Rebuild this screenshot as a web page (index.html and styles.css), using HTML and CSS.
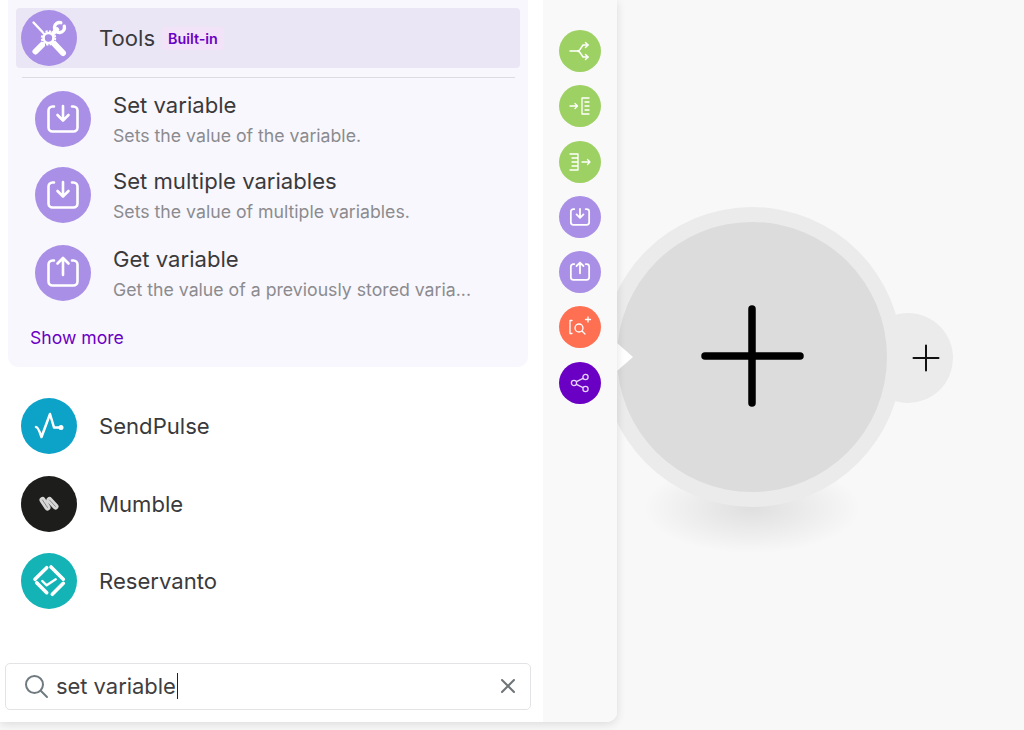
FILE: index.html
```html
<!DOCTYPE html>
<html lang="en">
<head>
    <meta charset="UTF-8">
    <title>Scenario editor</title>
    <link rel="stylesheet" href="styles.css">
</head>
<body>

    <div class="panel">
        <div class="list">
            <div class="group">
                <div class="app-row app-row-active">
                    <span class="icon icon-big bg-purple">
                        <svg width="44" height="44" viewBox="0 0 44 44" fill="none" stroke="#fff" stroke-linecap="round">
                            <circle cx="21.500" cy="22" r="5" stroke-width="2.600"/>
                            <circle cx="21.500" cy="22" r="6.800" stroke-width="1.800" stroke-dasharray="2.200 1.400" stroke-linecap="butt"/>
                            <path d="M6.500 6.500l9 9.500" stroke-width="2.400"/>
                            <path d="M27.500 28l8.500 9" stroke-width="6"/>
                            <path d="M15 29l-6.500 6.500" stroke-width="6"/>
                            <path d="M26.500 17l3.500-3.500" stroke-width="4.500"/>
                            <path d="M37.300 10.200A5 5 0 1 1 33.800 6.700" stroke-width="3.400"/>
                        </svg>
                    </span>
                    <span class="app-name">Tools</span>
                    <span class="badge">Built-in</span>
                </div>
                <div class="divider"></div>

                <div class="module module-tight">
                    <span class="icon icon-big bg-purple">
                        <svg width="38" height="38" viewBox="0 0 38 38" fill="none" stroke="#fff" stroke-width="2.600" stroke-linecap="round" stroke-linejoin="round">
                            <path d="M10 6.500H8.500a4 4 0 0 0-4 4v17a4 4 0 0 0 4 4h21a4 4 0 0 0 4-4v-17a4 4 0 0 0-4-4H28"/>
                            <path d="M19 6v14M13.500 15l5.500 5.500 5.500-5.500"/>
                        </svg>
                    </span>
                    <div class="module-text">
                        <div class="module-title">Set variable</div>
                        <div class="module-sub">Sets the value of the variable.</div>
                    </div>
                </div>
                <div class="module">
                    <span class="icon icon-big bg-purple">
                        <svg width="38" height="38" viewBox="0 0 38 38" fill="none" stroke="#fff" stroke-width="2.600" stroke-linecap="round" stroke-linejoin="round">
                            <path d="M10 6.500H8.500a4 4 0 0 0-4 4v17a4 4 0 0 0 4 4h21a4 4 0 0 0 4-4v-17a4 4 0 0 0-4-4H28"/>
                            <path d="M19 6v14M13.500 15l5.500 5.500 5.500-5.500"/>
                        </svg>
                    </span>
                    <div class="module-text">
                        <div class="module-title">Set multiple variables</div>
                        <div class="module-sub">Sets the value of multiple variables.</div>
                    </div>
                </div>
                <div class="module">
                    <span class="icon icon-big bg-purple">
                        <svg width="38" height="38" viewBox="0 0 38 38" fill="none" stroke="#fff" stroke-width="2.600" stroke-linecap="round" stroke-linejoin="round">
                            <path d="M10 6.500H8.500a4 4 0 0 0-4 4v17a4 4 0 0 0 4 4h21a4 4 0 0 0 4-4v-17a4 4 0 0 0-4-4H28"/>
                            <path d="M19 21V4M13.500 9.500L19 4l5.500 5.500"/>
                        </svg>
                    </span>
                    <div class="module-text">
                        <div class="module-title">Get variable</div>
                        <div class="module-sub">Get the value of a previously stored varia...</div>
                    </div>
                </div>
                <div class="show-more">Show more</div>
            </div>

            <div class="apps">
                <div class="app-row">
                    <span class="icon icon-big bg-sendpulse">
                        <svg width="36" height="36" viewBox="0 0 36 36" fill="none" stroke="#fff" stroke-width="2.500" stroke-linecap="round" stroke-linejoin="round">
                            <path d="M5 19c2 0 3.500 4 5.500 10L19 6l4 13.500h7"/>
                            <circle cx="30" cy="19.500" r="2.500" fill="#fff" stroke="none"/>
                        </svg>
                    </span>
                    <span class="app-name">SendPulse</span>
                </div>
                <div class="app-row">
                    <span class="icon icon-big bg-mumble">
                        <svg width="24" height="24" viewBox="0 0 24 24" fill="none" stroke-linecap="round">
                            <path d="M5.500 8l5 7.500M12.500 8l6 6.500" stroke="#d6d6d6" stroke-width="6"/>
                            <path d="M5.500 8l5 7.500M12.500 8l6 6.500" stroke="#8a8a8a" stroke-width="1"/>
                        </svg>
                    </span>
                    <span class="app-name">Mumble</span>
                </div>
                <div class="app-row">
                    <span class="icon icon-big bg-reservanto">
                        <svg width="38" height="38" viewBox="0 0 38 38" fill="none" stroke="#fff" stroke-linejoin="round" stroke-linecap="round">
                            <path d="M5 17.300L16.700 5.700M21 5l12.300 12.300" stroke-width="3.600"/>
                            <path d="M6.700 20.700l10 10M33.300 21.300l-11 11" stroke-width="3.600"/>
                            <path d="M12.300 19l4.400 4.300 9-6" stroke-width="2.400"/>
                        </svg>
                    </span>
                    <span class="app-name">Reservanto</span>
                </div>
            </div>

            <div class="search">
                <svg width="26" height="26" viewBox="0 0 26 26" fill="none" stroke="#6f7b80" stroke-width="2" stroke-linecap="round">
                    <circle cx="11.500" cy="11.500" r="8.500"/>
                    <path d="M18 18l6 6"/>
                </svg>
                <span class="search-text">set variable</span><span class="caret"></span>
                <svg class="search-clear" width="16" height="16" viewBox="0 0 16 16" fill="none" stroke="#6f7478" stroke-width="2" stroke-linecap="round">
                    <path d="M2 2l12 12M14 2L2 14"/>
                </svg>
            </div>
        </div>

        <div class="rail">
            <span class="icon icon-small bg-green">
                <svg width="24" height="24" viewBox="0 0 24 24" fill="none" stroke="#fff" stroke-width="1.500" stroke-linecap="round" stroke-linejoin="round">
                    <path d="M2 12h7c2 0 3-1 4-3l2-3h5M9 12c2 0 3 1 4 3l2 3h5"/>
                    <path d="M17.500 3.500L20 6l-2.500 2.500M17.500 15.500L20 18l-2.500 2.500"/>
                </svg>
            </span>
            <span class="icon icon-small bg-green">
                <svg width="24" height="24" viewBox="0 0 24 24" fill="none" stroke="#fff" stroke-width="1.300" stroke-linecap="round" stroke-linejoin="round">
                    <path d="M2 12h7M7 9.500l2.500 2.500L7 14.500"/>
                    <path d="M14 4v16h7M14 4h7M17 8h4M17 12h4M17 16h4"/>
                </svg>
            </span>
            <span class="icon icon-small bg-green">
                <svg width="24" height="24" viewBox="0 0 24 24" fill="none" stroke="#fff" stroke-width="1.300" stroke-linecap="round" stroke-linejoin="round">
                    <path d="M2 4h8v16H2M4 8h6M4 12h6M4 16h6"/>
                    <path d="M14 12h8M19.500 9.500L22 12l-2.500 2.500"/>
                </svg>
            </span>
            <span class="icon icon-small bg-purple">
                <svg width="24" height="24" viewBox="0 0 38 38" fill="none" stroke="#fff" stroke-width="2.800" stroke-linecap="round" stroke-linejoin="round">
                    <path d="M10 6.500H8.500a4 4 0 0 0-4 4v17a4 4 0 0 0 4 4h21a4 4 0 0 0 4-4v-17a4 4 0 0 0-4-4H28"/>
                    <path d="M19 6v14M13.500 15l5.500 5.500 5.500-5.500"/>
                </svg>
            </span>
            <span class="icon icon-small bg-purple">
                <svg width="24" height="24" viewBox="0 0 38 38" fill="none" stroke="#fff" stroke-width="2.800" stroke-linecap="round" stroke-linejoin="round">
                    <path d="M10 6.500H8.500a4 4 0 0 0-4 4v17a4 4 0 0 0 4 4h21a4 4 0 0 0 4-4v-17a4 4 0 0 0-4-4H28"/>
                    <path d="M19 21V4M13.500 9.500L19 4l5.500 5.500"/>
                </svg>
            </span>
            <span class="icon icon-small bg-orange">
                <svg width="28" height="28" viewBox="0 0 28 28" fill="none" stroke="#fff" stroke-width="1.300" stroke-linecap="round" stroke-linejoin="round">
                    <path d="M6 7.500H4v13h2"/>
                    <circle cx="13" cy="15" r="4"/>
                    <path d="M16 18l3 3M22 4v5M19.500 6.500h5"/>
                </svg>
            </span>
            <span class="icon icon-small bg-violet">
                <svg width="24" height="24" viewBox="0 0 24 24" fill="none" stroke="#e6d4f7" stroke-width="1.300">
                    <circle cx="6" cy="12" r="2.600"/>
                    <circle cx="17.500" cy="6" r="2.600"/>
                    <circle cx="17.500" cy="18" r="2.600"/>
                    <path d="M8.500 10.700l6.500-3.400M8.500 13.300l6.500 3.400"/>
                </svg>
            </span>
        </div>
    </div>

    <div class="canvas">
        <div class="node-shadow"></div>
        <div class="node-handle">
            <svg width="28" height="28" viewBox="0 0 28 28" stroke="#111" stroke-width="2" stroke-linecap="round">
                <path d="M14 1.500v25M1.500 14h25"/>
            </svg>
        </div>
        <div class="node-ring">
            <div class="node">
                <svg width="104" height="104" viewBox="0 0 104 104" stroke="#000" stroke-width="7.500" stroke-linecap="round">
                    <path d="M52 4v94M5 51h95"/>
                </svg>
            </div>
        </div>
        <div class="node-notch"></div>
    </div>

</body>
</html>
```

FILE: styles.css
```css
* {
    box-sizing: border-box;
}

body {
    margin: 0;
    width: 1024px;
    height: 730px;
    overflow: hidden;
    display: flex;
    position: relative;
    background-color: #f8f8f8;
    font-family: Inter, 'Liberation Sans', sans-serif;
    color: #3a3a3c;
}

.panel {
    width: 617px;
    height: 722px;
    flex: none;
    display: flex;
    position: relative;
    z-index: 2;
    background-color: #fff;
    border-bottom-right-radius: 10px;
    box-shadow: 0 2px 10px rgba(0,0,0,0.12);
    overflow: hidden;
}

.list {
    width: 543px;
    display: flex;
    flex-direction: column;
}

.rail {
    width: 74px;
    background-color: #f9f9f9;
    display: flex;
    flex-direction: column;
    gap: 13.300px;
    padding: 30px 0 0 16px;
}

.group {
    margin: 0 15px 0 8px;
    height: 367px;
    padding-top: 8px;
    background-color: #f8f7fd;
    border-radius: 0 0 10px 10px;
}

.icon {
    display: flex;
    align-items: center;
    justify-content: center;
    border-radius: 50%;
    flex: none;
}

.icon-big {
    width: 56px;
    height: 56px;
}

.icon-small {
    width: 42px;
    height: 42px;
}

.bg-purple { background-color: #a98fe6; }
.bg-green { background-color: #9dd163; }
.bg-orange { background-color: #ff6f52; }
.bg-violet { background-color: #6a00c4; }
.bg-sendpulse { background-color: #0da2c8; }
.bg-mumble { background-color: #1d1d1b; }
.bg-reservanto { background-color: #14b3b6; }

.app-row {
    display: flex;
    align-items: center;
    height: 60px;
    padding-left: 13px;
}

.app-row-active {
    margin: 0 8px;
    padding-left: 5px;
    background-color: #ebe6f5;
    border-radius: 4px;
}

.app-name {
    margin-left: 22px;
    font-size: 22.100px;
}

.badge {
    margin-left: 7px;
    padding: 3px 6px;
    background-color: #f3e3f8;
    border-radius: 4px;
    color: #6a00c4;
    font-size: 14.300px;
    font-weight: 600;
}

.divider {
    height: 1px;
    margin: 9px 13px 13px 14px;
    background-color: #dcdce6;
}

.module {
    display: flex;
    align-items: center;
    height: 56px;
    margin-bottom: 22px;
    padding-left: 27px;
}

.module-tight {
    margin-bottom: 20px;
}

.module-text {
    margin-left: 22px;
    margin-top: 1px;
}

.module-title {
    font-size: 22.100px;
    line-height: 28px;
}

.module-sub {
    margin-top: 5px;
    font-size: 17.700px;
    line-height: 24px;
    color: #8b8b8f;
}

.show-more {
    margin: 25px 0 0 22px;
    font-size: 17.600px;
    line-height: 24px;
    color: #6a00c4;
}

.apps {
    padding: 29px 8px 0 8px;
    display: flex;
    flex-direction: column;
    gap: 17.500px;
}

.apps .app-row {
    height: 60px;
}

.search {
    margin: auto 12px 12px 5px;
    height: 47px;
    display: flex;
    align-items: center;
    padding: 0 14px 2px 17px;
    background-color: #fff;
    border: 1px solid #e3e3e6;
    border-radius: 5px;
}

.search-text {
    margin-left: 7px;
    font-size: 22px;
    letter-spacing: -0.050px;
    color: #3f3f42;
}

.caret {
    width: 1px;
    height: 26px;
    margin-left: 1px;
    background-color: #222;
}

.search-clear {
    margin-left: auto;
}

.canvas {
    flex: 1;
}

.node-ring {
    position: absolute;
    left: 602px;
    top: 207px;
    width: 300px;
    height: 300px;
    display: flex;
    align-items: center;
    justify-content: center;
    background-color: #ebebeb;
    border-radius: 50%;
}

.node {
    width: 270px;
    height: 270px;
    display: flex;
    align-items: center;
    justify-content: center;
    background-color: #dcdcdc;
    border-radius: 50%;
}

.node-handle {
    position: absolute;
    left: 863px;
    top: 313px;
    width: 90px;
    height: 90px;
    display: flex;
    align-items: center;
    justify-content: center;
    padding-left: 35px;
    background-color: #ebebeb;
    border-radius: 50%;
}

.node-notch {
    position: absolute;
    left: 617px;
    top: 343px;
    border-left: 16px solid #fff;
    border-top: 14px solid transparent;
    border-bottom: 14px solid transparent;
}

.node-shadow {
    position: absolute;
    left: 642px;
    top: 462px;
    width: 220px;
    height: 92px;
    background: radial-gradient(ellipse at center, rgba(0,0,0,0.10), rgba(0,0,0,0) 70%);
}
```
